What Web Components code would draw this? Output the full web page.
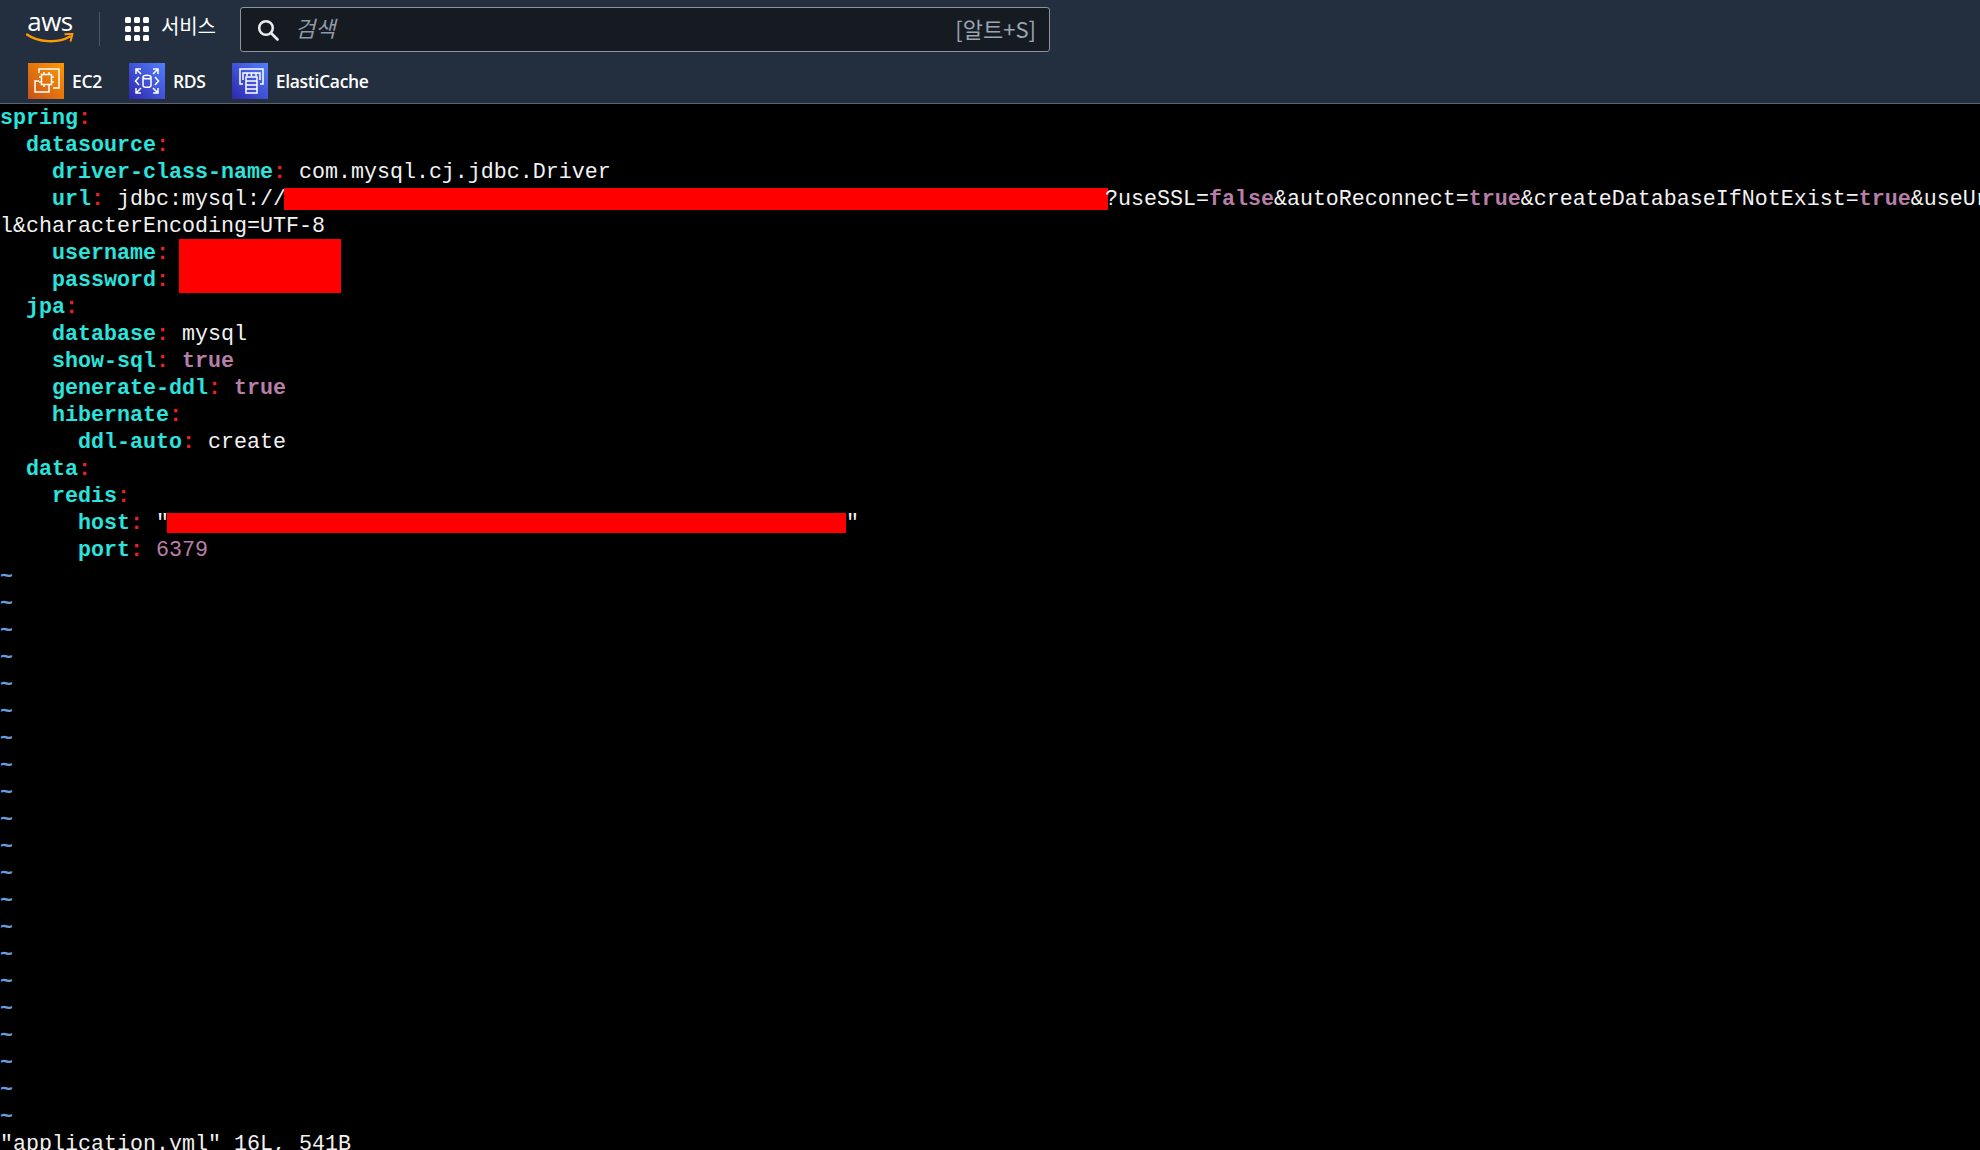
<!DOCTYPE html>
<html>
<head>
<meta charset="utf-8">
<title>application.yml</title>
<style>
  html, body { margin: 0; height: 100%; background: #000; overflow: hidden; }
  body { display: flex; flex-direction: column; }
</style>
</head>
<body>

<aws-topbar>
  <aws-shortcut label="EC2" kind="orange" style="margin-right:27px">
    <svg viewBox="0 0 36 36" fill="none" stroke="#fff" stroke-width="1.500">
      <path d="M11 10V6h20v19h-6"/>
      <path d="M11 18H7v11h14v-5"/>
      <rect x="13.500" y="11.500" width="10" height="10"/>
      <path d="M16 9v2.500M21 9v2.500M16 21.500V24M21 21.500V24M11 14h2.500M11 19h2.500M23.500 14H26M23.500 19H26"/>
    </svg>
  </aws-shortcut>
  <aws-shortcut label="RDS" kind="blue" style="margin-right:26px">
    <svg viewBox="0 0 36 36" fill="none" stroke="#fff" stroke-width="1.500">
      <path d="M7 11V6h5M7 6l5 5M29 11V6h-5M29 6l-5 5M7 25v5h5M7 30l5-5M29 25v5h-5M29 30l-5-5"/>
      <path d="M10 14l-3.500 4 3.500 4M26 14l3.500 4-3.500 4"/>
      <path d="M14 14v8.500c0 1 1.800 1.800 4 1.800s4-.8 4-1.800V14c0-1-1.800-1.800-4-1.800s-4 .8-4 1.800c0 1 1.800 1.800 4 1.800s4-.8 4-1.800"/>
    </svg>
  </aws-shortcut>
  <aws-shortcut label="ElastiCache" kind="blue">
    <svg viewBox="0 0 36 36" fill="none" stroke="#fff" stroke-width="1.500">
      <path d="M11 21H8V6h23v15h-3"/>
      <path d="M11 17v-7h17v7M15 10v3M19.500 10v3M24 10v3"/>
      <path d="M14 14h11v16H14zM14 18h11M14 22h11M14 26h11"/>
    </svg>
  </aws-shortcut>
</aws-topbar>
<vim-terminal></vim-terminal>

<template id="topbar-tpl">
  <style>
    :host { display: block; flex: none; height: 103px; background: #232f3e; border-bottom: 1px solid #5b6470; color: #fff; font-family: "Open Sans", "Noto Sans CJK KR", sans-serif; }
    .nav { display: flex; align-items: flex-start; height: 63px; box-sizing: border-box; padding: 7px 0 0 26px; }
    .logo { width: 48px; height: 36px; display: flex; flex-direction: column; align-items: center; margin-top: 3px; }
    .logo span { font: 400 26px/22px "Open Sans", sans-serif; letter-spacing: -.5px; height: 23px; color: #fff; }
    .logo svg { display: block; }
    .sep { width: 1px; height: 34px; margin: 5px 25px 0 25px; background: #4b5563; }
    .grid { display: grid; grid-template-columns: repeat(3, 6px); gap: 3px; margin: 10px 12px 0 0; }
    .grid i { width: 6px; height: 6px; background: #fff; border-radius: 1.500px; }
    .services { font: 400 20px/30px "Noto Sans CJK KR", sans-serif; margin: 4px 25px 0 0; width: 54px; white-space: nowrap; letter-spacing: -.2px; }
    .links { display: flex; padding-left: 28px; }
  </style>
  <div class="nav">
    <div class="logo">
      <span>aws</span>
      <svg width="48" height="11" viewBox="0 0 48 11" fill="none">
        <path d="M1 1.500C12 9.500 32 10.500 44 3.500" stroke="#f90" stroke-width="2.400" stroke-linecap="round"/>
        <path d="M38.500 1.300L46.500 .8 44.500 8.500" stroke="#f90" stroke-width="2" fill="none" stroke-linejoin="round"/>
      </svg>
    </div>
    <div class="sep"></div>
    <div class="grid"><i></i><i></i><i></i><i></i><i></i><i></i><i></i><i></i><i></i></div>
    <div class="services">서비스</div>
    <aws-search></aws-search>
  </div>
  <div class="links"><slot></slot></div>
</template>

<template id="search-tpl">
  <style>
    :host { display: flex; align-items: center; width: 810px; height: 45px; box-sizing: border-box; background: #161b22; border: 1px solid #8d949d; border-radius: 3px; padding: 0 13px 0 16px; }
    svg { flex: none; }
    .hint { font: italic 400 22px/1 "Noto Sans CJK KR", sans-serif; color: #8d99a8; margin-left: 16px; flex: 1; position: relative; top: -3px; }
    .keys { font: 400 22px/1 "Noto Sans CJK KR", sans-serif; color: #9aa5b1; position: relative; top: -2px; }
  </style>
  <svg width="22" height="22" viewBox="0 0 22 22" fill="none" stroke="#e9ebed" stroke-width="2.600">
    <circle cx="9" cy="9" r="6.800"/>
    <path d="M14 14l6.500 6.500" stroke-linecap="round"/>
  </svg>
  <span class="hint">검색</span>
  <span class="keys">[알트+S]</span>
</template>

<template id="shortcut-tpl">
  <style>
    :host { display: flex; align-items: center; height: 36px; }
    .ico { width: 36px; height: 36px; margin-right: 8px; }
    :host([kind="orange"]) .ico { background: linear-gradient(45deg, #c8511b, #f90); }
    :host([kind="blue"]) .ico { background: linear-gradient(45deg, #2e27ad, #527fff); }
    .ico ::slotted(svg) { display: block; width: 36px; height: 36px; }
    .label { font: 600 17.500px/36px "Open Sans", sans-serif; color: #fff; letter-spacing: -.3px; }
  </style>
  <div class="ico"><slot></slot></div>
  <span class="label"></span>
</template>

<template id="terminal-tpl">
  <style>
    :host { display: block; flex: 1; min-height: 0; overflow: hidden; background: #000; font: 400 21.67px/29px "Liberation Mono", monospace; color: #f2f2f2; }
    .row { height: 27px; white-space: pre; overflow: hidden; }
    .k { color: #2be3dc; font-weight: 700; }
    .c { color: #f02020; font-weight: 700; }
    .v { color: #b77fa8; }
    .t { color: #b77fa8; font-weight: 700; }
    .n { color: #6a9cdc; font-weight: 700; }
    .r { display: inline-block; vertical-align: top; background: #f00; }
  </style>
</template>

<script>
const K = s => `<span class="k">${s}</span>`;
const C = `<span class="c">:</span>`;
const V = s => `<span class="v">${s}</span>`;
const T = s => `<span class="t">${s}</span>`;
// redaction box: the reference's boxes were painted over the text, so they don't sit on the char grid
const R = (w, h, top, left, right) => `<span class="r" style="width:${w}px;height:${h}px;margin:${top}px ${right}px 0 ${left}px"></span>`;

const FILE_LINES = [
  K('spring') + C,
  '  ' + K('datasource') + C,
  '    ' + K('driver-class-name') + C + ' com.mysql.cj.jdbc.Driver',
  '    ' + K('url') + C + ' jdbc:mysql://' + R(824, 22, 3, -2, -3) + '?useSSL=' + T('false') + '&amp;autoReconnect=' + T('true') + '&amp;createDatabaseIfNotExist=' + T('true') + '&amp;useUr',
  'l&amp;characterEncoding=UTF-8',
  '    ' + K('username') + C + ' ' + R(162, 27, 0, -3, 0),
  '    ' + K('password') + C + ' ' + R(162, 27, 0, -3, 0),
  '  ' + K('jpa') + C,
  '    ' + K('database') + C + ' mysql',
  '    ' + K('show-sql') + C + ' ' + T('true'),
  '    ' + K('generate-ddl') + C + ' ' + T('true'),
  '    ' + K('hibernate') + C,
  '      ' + K('ddl-auto') + C + ' create',
  '  ' + K('data') + C,
  '    ' + K('redis') + C,
  '      ' + K('host') + C + ' "' + R(679, 20, 4, -2, 0) + '"',
  '      ' + K('port') + C + ' ' + V('6379'),
];

class AwsTopbar extends HTMLElement {
  constructor() {
    super();
    this.attachShadow({mode: 'open'}).appendChild(document.getElementById('topbar-tpl').content.cloneNode(true));
  }
}

class AwsSearch extends HTMLElement {
  constructor() {
    super();
    this.attachShadow({mode: 'open'}).appendChild(document.getElementById('search-tpl').content.cloneNode(true));
  }
}

class AwsShortcut extends HTMLElement {
  constructor() {
    super();
    this.attachShadow({mode: 'open'}).appendChild(document.getElementById('shortcut-tpl').content.cloneNode(true));
  }
  connectedCallback() {
    this.shadowRoot.querySelector('.label').textContent = this.getAttribute('label');
  }
}

class VimTerminal extends HTMLElement {
  constructor() {
    super();
    this.attachShadow({mode: 'open'}).appendChild(document.getElementById('terminal-tpl').content.cloneNode(true));
  }
  connectedCallback() {
    const rows = FILE_LINES.slice();
    while (rows.length < 38) rows.push('<span class="n">~</span>');
    rows.push('"application.yml" 16L, 541B');
    rows.forEach(html => {
      const row = document.createElement('div');
      row.className = 'row';
      row.innerHTML = html;
      this.shadowRoot.appendChild(row);
    });
  }
}

customElements.define('aws-search', AwsSearch);
customElements.define('aws-shortcut', AwsShortcut);
customElements.define('aws-topbar', AwsTopbar);
customElements.define('vim-terminal', VimTerminal);
</script>
</body>
</html>
